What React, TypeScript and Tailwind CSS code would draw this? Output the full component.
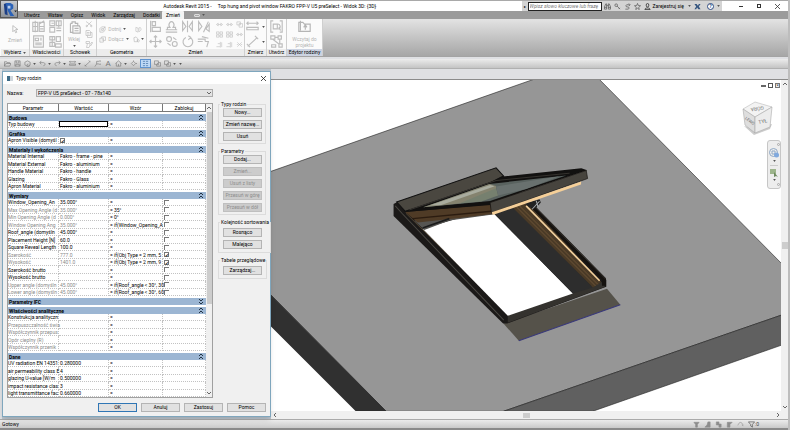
import { useState } from 'react';
import type { ReactNode } from 'react';
import { clsx } from 'clsx';

type Row = {
  name: string;
  value?: string;
  formula?: string;
  lock?: boolean;
  muted?: boolean;
  field?: 'text' | 'check';
};

type Section = { title: string; rows: Row[]; collapsed?: boolean };

const SECTIONS: Section[] = [
  { title: 'Budowa', rows: [{ name: 'Typ budowy', field: 'text' }] },
  { title: 'Grafika', rows: [{ name: 'Apron Visible (domyśl', field: 'check' }] },
  {
    title: 'Materiały i wykończenia',
    rows: [
      { name: 'Material Internal', value: 'Fakro - frame - pine' },
      { name: 'Material External', value: 'Fakro - aluminium' },
      { name: 'Handle Material', value: 'Fakro - handle' },
      { name: 'Glazing', value: 'Fakro - Glass' },
      { name: 'Apron Material', value: 'Fakro - aluminium' },
    ],
  },
  {
    title: 'Wymiary',
    rows: [
      { name: 'Window_Opening_An', value: '35.000°', lock: false },
      { name: 'Max Opening Angle (d', value: '35.000°', formula: '35°', lock: false, muted: true },
      { name: 'Min Opening Angle (d', value: '0.000°', formula: '0°', lock: false, muted: true },
      { name: 'Window Opening Ang', value: '35.000°', formula: 'if(Window_Opening_A', lock: false, muted: true },
      { name: 'Roof_angle (domyśln', value: '45.000°', lock: false },
      { name: 'Placement Height [N]', value: '60.0', lock: false },
      { name: 'Square Reveal Length', value: '100.0', lock: false },
      { name: 'Szerokość', value: '777.0', formula: 'if(Obj Type = 2 mm, 5', lock: true, muted: true },
      { name: 'Wysokość', value: '1401.0', formula: 'if(Obj Type = 2 mm, 9', lock: true, muted: true },
      { name: 'Szerokość brutto', lock: false },
      { name: 'Wysokość brutto', lock: false },
      { name: 'Upper angle (domyśln', value: '45.000°', formula: 'if(Roof_angle < 30°, 30', lock: false, muted: true },
      { name: 'Lower angle (domyśln', value: '45.000°', formula: 'if(Roof_angle < 30°, 60', lock: false, muted: true },
    ],
  },
  { title: 'Parametry IFC', rows: [], collapsed: true },
  {
    title: 'Właściwości analityczne',
    rows: [
      { name: 'Konstrukcja analityczn' },
      { name: 'Przepuszczalność świa', muted: true },
      { name: 'Współczynnik przepus', muted: true },
      { name: 'Opór cieplny (R)', muted: true },
      { name: 'Współczynnik przenik', muted: true },
    ],
  },
  {
    title: 'Dane',
    rows: [
      { name: 'UV radiation EN 14351', value: '0.280000' },
      { name: 'air permeability class E', value: '4' },
      { name: 'glazing U-value [W/m', value: '0.500000' },
      { name: 'impact resistance clas', value: '3' },
      { name: 'light transmittance fac', value: '0.660000' },
    ],
  },
];

const GROUPS = [
  { title: 'Typy rodzin', buttons: ['Nowy...', 'Zmień nazwę...', 'Usuń'], disabled: [] as string[], roomy: false },
  {
    title: 'Parametry',
    buttons: ['Dodaj...', 'Zmień...', 'Usuń z listy', 'Przesuń w górę', 'Przesuń w dół'],
    disabled: ['Zmień...', 'Usuń z listy', 'Przesuń w górę', 'Przesuń w dół'],
    roomy: false,
  },
  { title: 'Kolejność sortowania', buttons: ['Rosnąco', 'Malejąco'], disabled: [] as string[], roomy: true },
  { title: 'Tabele przeglądowe', buttons: ['Zarządzaj...'], disabled: [] as string[], roomy: true },
];

const TABS = ['Utwórz', 'Wstaw', 'Opisz', 'Widok', 'Zarządzaj', 'Dodatki'];

// All glyphs are drawn on a 16 x 16 grid.
const GLYPHS: Record<string, ReactNode> = {
  cursor: <path d="M5 1v11l3-3 2 5 2-1-2-5h4z" />,
  family: <path d="M1 3h6v11H1zM9 3h6v11H9zM1 8h6M9 8h6M4 1v14M9 5l6-4M10 11h4" />,
  typeProps: <path d="M1 1h6v6H1zM9 1h6v6H9zM1 9h6v6H1zM9 10h6M9 13h6M3 4h3M12 1v8" />,
  properties: <path d="M2 1h12v14H2zM4 4h4v3H4zM10 4h2M10 6h2M4 10h8M4 12h8" />,
  typeGrid: <path d="M1 2h6v4H1zM9 2h5v6H9zM1 9h6v5H1zM8 11h7v4H8zM4 2v12" />,
  paste: <path d="M3 3h2V1h4v2h3v3M3 3v11h3M6 6h8l1 2v7H6zM8 9h5M8 12h5" />,
  cut: <path d="M2 3l11 8M13 3L3 13M2 12a1.500 1.500 0 1 0 3 0 1.500 1.500 0 1 0-3 0M11 12a1.500 1.500 0 1 0 3 0 1.500 1.500 0 1 0-3 0" />,
  copy: <path d="M2 1h7l2 2v8H2zM5 11v4h9V5h-3M4 5h5M4 8h5" />,
  brush: <path d="M2 3h7v4H2zM5 7l-2 8h5l2-4M9 10l5-6 1 2-4 6z" />,
  cope: <path d="M2 6l4-4h8v7l-4 5H2zM6 6h4v4H6zM10 6l4-4" />,
  join: <path d="M2 5h8v9H2zM6 5V2h9v8h-5M6 9h4" />,
  split: <path d="M2 3l5 2v9l-5-2zM9 4c5-2 6 3 4 6s-4 3-4 3z" />,
  paint: <path d="M2 4l5-2 3 3v8H3zM12 8a2 3 0 1 0 .1 0" />,
  align: <path d="M2 1v14M4 2h4v5H4zM4 9h10v5H4z" />,
  offset: <path d="M1 12h14M3 12V9h3a3 4 0 1 1 4 0h3v3M1 15h14" />,
  mirror: <path d="M8 1v14M2 2v11l4-5zM14 2v11l-4-5z" />,
  mirrorDraw: <path d="M2 2v11l4-5zM8 15l6-13M15 5v9l-4-3z" />,
  move: <path d="M8 1v14M1 8h14M6 3l2-2 2 2M6 13l2 2 2-2M3 6L1 8l2 2M13 6l2 2-2 2" />,
  copyObj: <path d="M2 5a3 3 0 1 0 6 0 3 3 0 1 0-6 0M9 11a3 3 0 1 0 6 0 3 3 0 1 0-6 0M10 3l4 3M3 10l4 3" />,
  rotate: <path d="M11 3a6 6 0 1 1-5 0M9 1l3 2-3 3" />,
  trim: <path d="M1 5h9v3M1 8h6M10 8h4l-2 7M6 2l8 2" />,
  pin: <path d="M1 8l4-3v6zM15 8l-4-3v6zM5 8h6" />,
  array: <path d="M1 2h6v5H1zM9 2h6v5H9zM1 9h6v5H1zM9 9h6v5H9z" />,
  scale: <path d="M2 2h8v7H2zM7 6h8v8H7z" />,
  extend: <path d="M1 13h8M10 2v13M4 6h5M13 3v11" />,
  remove: <path d="M3 3l10 10M13 3L3 13M2 8h3M11 8h3" />,
  measure: <path d="M1 4h14M1 9h14v3H1zM3 2L1 4l2 2M13 2l2 2-2 2" />,
  dimension: <path d="M2 14L14 3M1 11l4 4M11 1l4 4" />,
  group: <path d="M4 1H1v14h3M12 1h3v14h-3M4 5h5v6H4zM9 5a3 3 0 1 1 1 6M11 9l2 4" />,
  create: <path d="M1 1h5v4H1zM10 1h4v4h-4zM6 3h4M3 5l8 6M12 5v5M2 12h5v3H2zM11 11h4v4h-4z" />,
  load: <path d="M1 3v11h14V5H8L6 3zM9 12V7M7 9l2-3 2 3M3 1v12" />,
  open: <path d="M1 14V4h5l1 2h6v2M1 14l3-6h12l-3 6z" />,
  save: <path d="M2 2h12v12H2zM5 2v5h6V2M4 14v-4h8v4" />,
  sync: <path d="M2 5l6-3 6 3v6l-6 4-6-4zM10 9a3 3 0 1 0 3 3" />,
  undo: <path d="M2 6h8c5 0 5 7 0 7M5 2L2 6l3 4" />,
  redo: <path d="M14 6H6c-5 0-5 7 0 7M11 2l3 4-3 4" />,
  tag: <path d="M2 15l4-6M6 9V3h5a4 4 0 1 1 0 6z" />,
  house: <path d="M1 8l7-6 7 6M3 7v7h10V7M8 14V9" />,
  section: <path d="M3 8l5-5 5 5-5 5zM13 8h3M8 1v2" />,
  thin: <path d="M2 3h5M9 3h5M2 8h5M9 8h5M2 13h5M9 13h5" />,
  windows: <path d="M1 2h9v8H1zM6 10v4h9V6h-5M7 7l3 3" />,
  binoculars: <path d="M1 14V9l3-7h2v12zM15 14V9l-3-7h-2v12zM6 6h4M1 10h5M10 10h5" />,
  key: <path d="M2 5a3 3 0 1 0 6 0 3 3 0 1 0-6 0M7 7l7 7M11 13l2-2" />,
  exchange: <path d="M13 4H6a3 3 0 0 0 0 5h4a3 3 0 0 1 0 5H3M11 1l3 3-3 3" />,
  star: <path d="M8 1l2 5h5l-4 4 1 5-4-3-4 3 1-5-4-4h5z" />,
  user: <path d="M5 5a3 4 0 1 0 6 0 3 4 0 1 0-6 0M2 15c0-5 12-5 12 0z" />,
  filter: <path d="M1 2h14l-5 6v6l-4-3V8z" />,
  selectLink: <path d="M2 3h12l-4 5v6H6V8z" fill="currentColor" />,
  selectUnder: <path d="M9 2h5v12H2l5-5z" fill="currentColor" />,
  selectPin: <path d="M3 2h6v5h5v7H9V9H3z" fill="currentColor" />,
  selectFace: <path d="M3 3h11L9 8v6H3z" fill="currentColor" />,
  drag: <path d="M2 10c3-9 9-9 12 0M11 9l3 2" />,
};

function Glyph({ name, className }: { name: string; className?: string }) {
  return (
    <svg
      viewBox="0 0 16 16"
      fill="none"
      stroke="currentColor"
      strokeWidth="1.4"
      className={clsx('shrink-0', className)}
      aria-hidden="true"
    >
      {GLYPHS[name]}
    </svg>
  );
}

function Caret() {
  return (
    <svg viewBox="0 0 4 3" className="h-[2px] w-[3px] shrink-0" aria-hidden="true">
      <path d="M0 0h4L2 3z" fill="#555" />
    </svg>
  );
}

function Tool({ glyph, label, size = 'lg' }: { glyph: string; label: string; size?: 'sm' | 'md' | 'lg' }) {
  return (
    <button type="button" aria-label={label} className="flex items-center justify-center text-[#bdbdbd]">
      <Glyph
        name={glyph}
        className={size === 'lg' ? 'size-[13px]' : size === 'md' ? 'size-[8px]' : 'size-[7px]'}
      />
    </button>
  );
}

function Panel({ title, className, active, menu, children }: {
  title: string;
  className: string;
  active?: boolean;
  menu?: boolean;
  children: ReactNode;
}) {
  return (
    <section className={clsx('flex shrink-0 flex-col border-r border-[#cfcfcf] bg-[#fbfbfb]', className)}>
      <div className="flex flex-1 items-center justify-center">{children}</div>
      <h2
        className={clsx(
          'flex h-[7px] items-center justify-center gap-[2px] leading-[7px] whitespace-nowrap',
          active ? 'bg-[#ccd3e2]' : 'bg-[#ececec]',
        )}
      >
        {title}
        {menu && <Caret />}
      </h2>
    </section>
  );
}

function TitleBar() {
  return (
    <div className="flex h-[11px] items-stretch border-t border-[#a9a9a9] bg-white">
      <h1 className="flex-1 text-center leading-[10px] whitespace-pre">
        {'Autodesk Revit 2015 -     Top hung and pivot window FAKRO FPP-V U5 preSelect - Widok 3D: {3D}'}
      </h1>
      <div className="flex items-center bg-[#d4d4d4] pr-[2px]">
        <span className="w-[6px] text-center text-[4px]">▸</span>
        <input
          aria-label="Wyszukaj"
          placeholder="Wpisz słowo kluczowe lub frazę"
          className="h-[9px] w-[74px] border border-[#222] bg-white px-px italic placeholder:text-[#777]"
        />
        <div className="flex items-center gap-[3px] pl-[2px] text-[#444]">
          <Glyph name="binoculars" className="size-[7px]" />
          <Glyph name="key" className="size-[7px]" />
          <Glyph name="exchange" className="size-[7px]" />
          <Glyph name="star" className="size-[7px]" />
          <button type="button" className="flex items-center gap-[2px] text-black">
            <Glyph name="user" className="size-[7px]" />
            Zarejestruj się
          </button>
        </div>
        <div className="flex items-center gap-[3px] pl-[4px]">
          <Caret />
          <svg viewBox="0 0 16 16" className="size-[7px]" aria-hidden="true">
            <path d="M1 2h5l3 4 2-4h4l-4 6 4 6h-5L7 10l-2 4H1l4-6z" fill="#35557f" />
          </svg>
          <button
            type="button"
            aria-label="Pomoc"
            className="ml-[3px] flex size-[7px] items-center justify-center rounded-full border border-[#2e4a80] bg-white font-bold text-[#2e4a80]"
          >
            ?
          </button>
          <Caret />
        </div>
      </div>
      <div className="flex w-[66px] items-center justify-end gap-[14px] pr-[8px] pl-[4px]">
        <button type="button" aria-label="Minimalizuj" className="h-px w-[4px] bg-[#333]" />
        <button type="button" aria-label="Przywróć" className="size-[4px] border border-[#333]" />
        <button type="button" aria-label="Zamknij">
          <svg viewBox="0 0 5 5" className="size-[5px]" stroke="#333" strokeWidth="0.8" aria-hidden="true">
            <path d="M0 0l5 5M5 0L0 5" />
          </svg>
        </button>
      </div>
    </div>
  );
}

function Header() {
  return (
    <header className="flex bg-[#9b9b9b]">
      <button
        type="button"
        aria-label="Menu aplikacji"
        className="flex h-[18px] w-[18px] items-center justify-center border border-[#555] bg-linear-to-b from-[#c4c8ce] to-[#8d9299]"
      >
        <svg viewBox="0 0 16 16" className="size-[15px]" aria-hidden="true">
          <path d="M2 2l3-1 1 13-3-1z" fill="#1c3f86" />
          <path d="M4 1h5l3 2v4l-3 2 4 6H9L6 9z" fill="#2a62b8" />
          <path d="M6 4h3v3H6z" fill="#b9cdea" />
          <path d="M13 9h3l-1.500 2z" fill="#222" />
        </svg>
      </button>
      <div className="flex-1">
        <TitleBar />
        <nav className="flex h-[8px] items-center pl-[6px] leading-[8px]">
          <div className="flex gap-[8px]">
            {TABS.map((tab) => (
              <a key={tab} href="#">
                {tab}
              </a>
            ))}
          </div>
          <a href="#" aria-current="page" className="ml-[2px] rounded-t-[1px] bg-[#f4f4f4] px-[4px]">
            Zmień
          </a>
          <button
            type="button"
            aria-label="Minimalizuj wstążkę"
            className="ml-[10px] flex items-center gap-[2px]"
          >
            <span className="h-[3px] w-[6px] rounded-[1px] border border-[#ddd] bg-[#aaa]" />
            <Caret />
          </button>
        </nav>
      </div>
    </header>
  );
}

function Ribbon() {
  return (
    <div className="flex h-[38px] border-b border-[#a3a3a3] bg-linear-to-b from-[#e3e3e3] to-[#a6a6a6]">
      <Panel title="Wybierz" menu className="w-[30px] pl-px">
        <button type="button" className="flex flex-col items-center gap-[3px] text-[#b5b5b5]">
          <Glyph name="cursor" className="size-[9px]" />
          Zmień
        </button>
      </Panel>
      <Panel title="Właściwości" className="w-[34px]">
        <div className="grid grid-cols-2 gap-x-[4px] gap-y-[2px]">
          <Tool glyph="family" label="Kategoria rodziny" />
          <Tool glyph="typeProps" label="Typy rodzin" />
          <Tool glyph="properties" label="Właściwości" />
          <Tool glyph="typeGrid" label="Właściwości typu" />
        </div>
      </Panel>
      <Panel title="Schowek" className="w-[33px]">
        <div className="flex items-center gap-[4px]">
          <button type="button" className="flex flex-col items-center gap-[2px] text-[#b5b5b5]">
            <Glyph name="paste" className="size-[13px]" />
            Wklej
            <Caret />
          </button>
          <div className="flex flex-col gap-[2px]">
            <Tool glyph="cut" label="Wytnij" size="md" />
            <Tool glyph="copy" label="Kopiuj" size="md" />
            <Tool glyph="brush" label="Uzgodnij właściwości" size="md" />
          </div>
        </div>
      </Panel>
      <Panel title="Geometria" className="w-[50px]">
        <div className="grid grid-cols-[auto_auto] items-center gap-x-[4px] gap-y-[3px] text-[#b5b5b5]">
          <button type="button" className="flex items-center gap-[2px]">
            <Glyph name="cope" className="size-[7px]" />
            Dotnij
            <Caret />
          </button>
          <Tool glyph="split" label="Podziel" size="sm" />
          <button type="button" className="flex items-center gap-[2px]">
            <Glyph name="join" className="size-[7px]" />
            Dołącz
            <Caret />
          </button>
          <button type="button" aria-label="Maluj" className="flex items-center gap-px">
            <Glyph name="paint" className="size-[7px]" />
            <Caret />
          </button>
        </div>
      </Panel>
      <Panel title="Zmień" className="w-[98px]">
        <div className="flex items-center gap-[6px]">
          <div className="grid grid-cols-4 gap-x-[3px] gap-y-[2px]">
            <Tool glyph="align" label="Wyrównaj" />
            <Tool glyph="offset" label="Odsuń" />
            <Tool glyph="mirror" label="Lustro - wybierz oś" />
            <Tool glyph="mirrorDraw" label="Lustro - narysuj oś" />
            <Tool glyph="move" label="Przesuń" />
            <Tool glyph="copyObj" label="Kopiuj element" />
            <Tool glyph="rotate" label="Obróć" />
            <Tool glyph="trim" label="Przytnij" />
          </div>
          <div className="grid grid-cols-3 gap-[3px]">
            <Tool glyph="pin" label="Podziel element" size="sm" />
            <Tool glyph="pin" label="Podziel z odstępem" size="sm" />
            <Tool glyph="scale" label="Odepnij" size="sm" />
            <Tool glyph="array" label="Szyk" size="sm" />
            <Tool glyph="array" label="Skala" size="sm" />
            <Tool glyph="pin" label="Przypnij" size="sm" />
            <Tool glyph="extend" label="Wydłuż pojedynczy" size="sm" />
            <Tool glyph="extend" label="Wydłuż wiele" size="sm" />
            <Tool glyph="remove" label="Usuń element" size="sm" />
          </div>
        </div>
      </Panel>
      <Panel title="Zmierz" className="w-[22px]">
        <div className="grid grid-cols-[auto_auto] items-center gap-x-[3px] gap-y-[2px]">
          <Tool glyph="measure" label="Zmierz odległość" />
          <Caret />
          <Tool glyph="dimension" label="Wymiar" />
          <Caret />
        </div>
      </Panel>
      <Panel title="Utwórz" className="w-[20px]">
        <div className="flex flex-col gap-[2px]">
          <Tool glyph="group" label="Utwórz grupę" />
          <Tool glyph="create" label="Utwórz podobny" />
        </div>
      </Panel>
      <Panel title="Edytor rodziny" active className="w-[36px]">
        <button type="button" className="flex flex-col items-center leading-[6px] text-[#b5b5b5]">
          <Glyph name="load" className="mb-[3px] size-[13px]" />
          <span>Wczytaj do</span>
          <span>projektu</span>
        </button>
      </Panel>
    </div>
  );
}

function QuickAccess() {
  const tools: { glyph: string; label: string; menu?: boolean; on?: boolean }[] = [
    { glyph: 'open', label: 'Otwórz' },
    { glyph: 'save', label: 'Zapisz' },
    { glyph: 'sync', label: 'Synchronizuj', menu: true },
    { glyph: 'undo', label: 'Cofnij', menu: true },
    { glyph: 'redo', label: 'Ponów', menu: true },
    { glyph: 'measure', label: 'Zmierz', menu: true },
    { glyph: 'dimension', label: 'Wymiar wyrównany' },
    { glyph: 'tag', label: 'Oznacz' },
    { glyph: 'text', label: 'Tekst' },
    { glyph: 'house', label: 'Widok 3D', menu: true },
    { glyph: 'section', label: 'Przekrój' },
    { glyph: 'thin', label: 'Cienkie linie', on: true },
    { glyph: 'windows', label: 'Zamknij ukryte' },
    { glyph: 'windows', label: 'Przełącz okna', menu: true },
  ];
  return (
    <div className="mt-[2px] flex h-[10px] items-center gap-[3px] border-b border-[#b0b0b0] bg-linear-to-b from-[#ececec] to-[#c4c4c4] pl-[4px] text-[#777]">
      {tools.map(({ glyph, label, menu, on }) => (
        <button
          key={label}
          type="button"
          aria-label={label}
          className={clsx(
            'flex h-[9px] items-center gap-[2px]',
            on && 'border border-[#5f93cf] bg-[#bfd9f6] px-px text-[#2d5d98]',
          )}
        >
          {glyph === 'text' ? (
            <span className="w-[8px] text-center text-[8px]">A</span>
          ) : (
            <Glyph name={glyph} className="size-[7px]" />
          )}
          {menu && <Caret />}
        </button>
      ))}
      <Caret />
    </div>
  );
}

function DialogButton({ label, disabled, primary }: { label: string; disabled?: boolean; primary?: boolean }) {
  return (
    <button
      type="button"
      disabled={disabled}
      className={clsx(
        'h-[9px] w-[39px] border text-center leading-[7px]',
        disabled && 'border-[#bfbfbf] bg-[#cccccc] text-[#8c8c8c]',
        !disabled && primary && 'border-[#2f76b5] bg-[#e1e1e1]',
        !disabled && !primary && 'border-[#b4b4b4] bg-[#e1e1e1]',
      )}
    >
      {label}
    </button>
  );
}

const CHECKBOX =
  'block size-[5px] appearance-none border-t border-l border-[#777] bg-white text-[5px] leading-[4px] font-bold checked:border checked:after:block checked:after:content-["✓"]';

function ParameterTable() {
  const [locks, setLocks] = useState<Record<string, boolean>>({});
  const cell = 'border-r border-b border-dotted border-[#c2c2c2] p-0 whitespace-nowrap';
  const head = 'border-r border-b border-[#777] p-0 font-normal';

  return (
    <div className="flex border border-[#a0a0a0] bg-white">
      <div className="min-w-0 flex-1">
        <table className="w-full table-fixed border-separate border-spacing-0 leading-[6px]">
          <colgroup>
            <col className="w-[51px]" />
            <col className="w-[50px]" />
            <col className="w-[54px]" />
            <col />
          </colgroup>
          <thead>
            <tr className="h-[8px]">
              <th className={head}>Parametr</th>
              <th className={head}>Wartość</th>
              <th className={head}>Wzór</th>
              <th className={head}>Zablokuj</th>
            </tr>
          </thead>
          {SECTIONS.map((section) => (
            <tbody key={section.title}>
              <tr className="h-[2px]">
                <td colSpan={4} className="p-0" />
              </tr>
              <tr className="h-[7px] bg-[#9cb6d3]">
                <th colSpan={4} className="p-0 px-px text-left font-bold">
                  <div className="flex items-center justify-between pr-[2px]">
                    {section.title}
                    <svg viewBox="0 0 4 5" className="h-[5px] w-[4px]" fill="none" stroke="#234" aria-hidden="true">
                      <path d={section.collapsed ? 'M0 0l2 2 2-2M0 3l2 2 2-2' : 'M0 2l2-2 2 2M0 5l2-2 2 2'} />
                    </svg>
                  </div>
                </th>
              </tr>
              {section.rows.map((row, i) => (
                <tr
                  key={row.name}
                  className={clsx(i % 2 ? 'h-[8px]' : 'h-[7px]', row.muted && 'text-[#8a8a8a]')}
                >
                  <td className={cell}>{row.name}</td>
                  <td className={clsx(cell, row.field !== 'text' && 'pl-px')}>
                    {row.field === 'text' && (
                      <input aria-label={row.name} className="block h-[6px] w-full border border-black" />
                    )}
                    {row.field === 'check' && (
                      <input type="checkbox" aria-label={row.name} defaultChecked className={CHECKBOX} />
                    )}
                    {row.value}
                  </td>
                  <td className={clsx(cell, 'pl-px text-black')}>= {row.formula}</td>
                  <td className={clsx(cell, 'pl-px')}>
                    {row.lock !== undefined && (
                      <input
                        type="checkbox"
                        aria-label={`Zablokuj ${row.name}`}
                        checked={locks[row.name] ?? row.lock}
                        onChange={(e) => setLocks({ ...locks, [row.name]: e.target.checked })}
                        className={clsx(CHECKBOX, 'text-black')}
                      />
                    )}
                  </td>
                </tr>
              ))}
            </tbody>
          ))}
        </table>
      </div>
      <div className="flex w-[6px] shrink-0 flex-col items-center bg-[#f0f0f0]">
        <Chevron d="M0 3l2-2 2 2" />
        <div className="h-[192px] w-[5px] bg-[#cdcdcd]" />
        <div className="mt-auto">
          <Chevron d="M0 1l2 2 2-2" />
        </div>
      </div>
    </div>
  );
}

function Chevron({ d }: { d: string }) {
  return (
    <svg viewBox="0 0 4 4" className="my-[2px] size-[4px] shrink-0" fill="none" stroke="#666" aria-hidden="true">
      <path d={d} />
    </svg>
  );
}

function FamilyTypesDialog() {
  return (
    <div
      role="dialog"
      aria-label="Typy rodzin"
      className="z-10 flex w-[269px] shrink-0 flex-col border border-[#7fa6bd] bg-[#f0f0f0] shadow-md"
    >
      <div className="flex h-[12px] items-center gap-[3px] bg-white px-[4px]">
        <svg viewBox="0 0 6 5" className="h-[5px] w-[6px]" aria-hidden="true">
          <path d="M0 0h6v5H0z" fill="#cfd6dc" />
          <path d="M0 0h3v5H0z" fill="#3d6a86" />
        </svg>
        <h2>Typy rodzin</h2>
        <button type="button" aria-label="Zamknij okno" className="ml-auto">
          <svg viewBox="0 0 5 5" className="size-[5px]" stroke="#222" strokeWidth="0.8" aria-hidden="true">
            <path d="M0 0l5 5M5 0L0 5" />
          </svg>
        </button>
      </div>
      <div className="flex gap-[5px] px-[4px] pt-[5px]">
        <div className="flex min-w-0 flex-1 flex-col">
          <div className="flex h-[8px] items-center">
            <label htmlFor="family-type" className="w-[29px]">
              Nazwa:
            </label>
            <div className="grid flex-1 items-center">
              <select
                id="family-type"
                className="col-start-1 row-start-1 h-[8px] appearance-none border border-[#adadad] bg-[#e3e3e3] px-px leading-[6px]"
              >
                <option>FPP-V U5 preSelect - 07 - 78x140</option>
              </select>
              <div className="pointer-events-none col-start-1 row-start-1 justify-self-end pr-[2px]">
                <Chevron d="M0 1l2 2 2-2" />
              </div>
            </div>
          </div>
          <div className="mt-[6px]">
            <ParameterTable />
          </div>
        </div>
        <div className="flex w-[48px] flex-col gap-[4px] pt-[12px]">
          {GROUPS.map((group) => (
            <fieldset
              key={group.title}
              className={clsx('border border-[#dcdcdc] pl-[4px]', group.roomy ? 'pt-[3px] pb-[3px]' : 'pt-px pb-[2px]')}
            >
              <legend className="-ml-[3px] px-px leading-[6px] whitespace-nowrap">{group.title}</legend>
              <div className="flex flex-col gap-[3px]">
                {group.buttons.map((label) => (
                  <DialogButton key={label} label={label} disabled={group.disabled.includes(label)} />
                ))}
              </div>
            </fieldset>
          ))}
        </div>
      </div>
      <div className="flex justify-end gap-[4px] px-[4px] pt-[5px] pb-[4px]">
        <DialogButton label="OK" primary />
        <DialogButton label="Anuluj" />
        <DialogButton label="Zastosuj" />
        <DialogButton label="Pomoc" />
      </div>
    </div>
  );
}

function Model() {
  return (
    <svg
      viewBox="272 80 509 331"
      preserveAspectRatio="xMidYMid slice"
      className="absolute inset-0 size-full"
      role="img"
      aria-label="Widok 3D okna dachowego"
    >
      <g stroke="#222" strokeWidth="0.6">
        <path d="M262 175L536 79h63l191 193v40L504 411H387L262 285z" fill="#969696" />
        <path d="M262 285l125 126h-30L262 316z" fill="#303030" />
        <path d="M790 312L504 411h89l197-69z" fill="#606060" />
      </g>
      {/* the window itself, drawn at three times its size */}
      <g transform="translate(380 150) scale(0.3333)">
        <path d="M372 520l46 52 304-108-40-48z" fill="#55524a" />
        <path d="M418 572l304-108" stroke="#39397c" strokeWidth="3" />
        <path d="M43 162L60 153 372 78l308 312v20L383 520h-12L43 198z" fill="#1b1918" />
        <path d="M385 518v-22l290-103v18z" fill="#34322e" />
        <path d="M48 168l20 22 305 320" stroke="#4a4843" strokeWidth="3" fill="none" />
        <path d="M80 190l310 305" stroke="#6d5a40" strokeWidth="2" fill="none" />
        <path d="M52 156L350 54l22 24-38 20L78 184z" fill="#4a4740" stroke="#111" strokeWidth="3" />
        <path d="M130 236l110-32 105-12 235 238-195 67z" fill="#fff" />
        <path d="M345 192l55-24 240 244-60 18z" fill="#2d2d2d" />
        <path d="M395 168l50-10 220 238-25 16z" fill="#4a3a26" />
        <path d="M408 168l240 240M420 168l235 235" stroke="#7d6140" strokeWidth="2" />
        <path d="M440 168l220 224" stroke="#f1cf9c" strokeWidth="5" />
        <path d="M455 165l218 222v20" stroke="#15120f" strokeWidth="12" fill="none" />
        <path d="M470 175l208 212" stroke="#45423c" strokeWidth="2" />
        <path d="M435 160l45-12 4 10-16 18-18-4z" fill="#222" />
        <path d="M458 178l22-24M470 152l6 20" stroke="#a9adb0" strokeWidth="3" />
        <path d="M105 212l30 28 75-28 130-18v-20z" fill="#565552" />
        <path d="M78 186l254-22 6 28-98 12-125 14z" fill="#4f3b26" />
        <path d="M100 206l236-22" stroke="#2b1c10" strokeWidth="4" />
        <path d="M130 234l80-28" stroke="#1b1b1b" strokeWidth="5" />
        <path d="M75 186l270-94 25-12 235-25 18 6-290 96v8z" fill="#121110" />
        <path d="M132 172L330 102l230-25-228 76z" fill="#59625f" />
        <path d="M132 172L330 102l20 6v26l-110 27z" fill="#85836f" />
        <path d="M150 167l182-62 14 4-160 56z" fill="#a9ac9f" />
        <path d="M240 161l110-46 6 22-50 18z" fill="#76806f" />
        <path d="M350 110l190-31-100 38-84 20z" fill="#69716f" />
        <path d="M90 180l260-88 220-22" stroke="#47443e" strokeWidth="2" fill="none" />
        <path d="M332 158L620 62l4 24-288 103z" fill="#47443e" stroke="#15120f" strokeWidth="2" />
        <path d="M337 187l268-92-1 9-264 91z" fill="#f5cf98" />
      </g>
    </svg>
  );
}

function ViewCube() {
  return (
    <svg viewBox="0 0 34 36" className="h-[36px] w-[34px]" aria-label="ViewCube" role="img">
      <path d="M4 25l10 9 16-6 2-5-18 4z" fill="#ccc" />
      <path d="M3 8l12-7 17 5-17 10z" fill="#f3f3f3" stroke="#bbb" strokeWidth="0.6" />
      <path d="M3 8l12 8v16L5 24z" fill="#dedede" stroke="#aaa" strokeWidth="0.6" />
      <path d="M15 16l17-10-2 20-15 6z" fill="#ececec" stroke="#aaa" strokeWidth="0.6" />
      <text x="17" y="6" transform="rotate(172 17 6)" fontSize="5" fill="#777" textAnchor="middle">
        GÓRA
      </text>
      <text x="23" y="22" transform="rotate(-12 23 22)" fontSize="5" fill="#666" textAnchor="middle">
        TYŁ
      </text>
      <text x="9" y="21" transform="rotate(38 9 21)" fontSize="4" fill="#666" textAnchor="middle">
        LEWO
      </text>
    </svg>
  );
}

function NavigationBar() {
  return (
    <div className="flex h-[49px] w-[14px] flex-col items-center justify-between rounded-[3px] border border-[#c6c6c6] bg-[#ededed] py-[2px]">
      <span className="size-[3px] self-end rounded-full border border-[#aaa]" />
      <button type="button" aria-label="Koło nawigacji">
        <svg viewBox="0 0 10 10" className="size-[10px]" fill="none" aria-hidden="true">
          <circle cx="4.500" cy="4.500" r="4" stroke="#8ea7c4" />
          <path d="M3 3h3v3H3z" stroke="#8ea7c4" />
          <circle cx="7.500" cy="7" r="2.500" fill="#7fa8dd" />
        </svg>
      </button>
      <Caret />
      <button type="button" aria-label="Powiększ" className="border-t border-[#ccc] pt-[3px]">
        <svg viewBox="0 0 8 8" className="size-[8px]" aria-hidden="true">
          <path d="M0 0h6v5H0z" fill="#9db58c" />
          <path d="M4 3l4 5-2-1-2 1z" fill="#6f8a60" />
        </svg>
      </button>
      <Caret />
      <span className="size-[3px] self-end rounded-full border border-[#aaa]" />
    </div>
  );
}

function Viewport() {
  return (
    <main className="flex min-w-0 flex-1 flex-col pt-[10px]">
      <div className="flex flex-1 border-t border-[#8b8b8b]">
        <div className="relative flex-1 overflow-hidden bg-white">
          <Model />
          <div className="absolute top-[3px] right-px flex items-center gap-[2px] text-[#444]">
            <span className="h-[2px] w-[5px] border border-[#666]" />
            <span className="size-[5px] border border-[#555]" />
            <span className="flex size-[5px] items-center justify-center border border-[#777] leading-none">×</span>
          </div>
          <div className="absolute top-[21px] right-[7px]">
            <ViewCube />
          </div>
          <div className="absolute top-[60px] right-0">
            <NavigationBar />
          </div>
        </div>
        <div className="flex w-[7px] flex-col items-center justify-between bg-[#f0f0f0]">
          <Chevron d="M0 3l2-2 2 2" />
          <div className="h-[7px] w-[6px] bg-[#cdcdcd]" />
          <Chevron d="M0 1l2 2 2-2" />
        </div>
      </div>
      <div className="flex h-[8px] items-center justify-between bg-[#f0f0f0] pr-[8px] pl-[2px]">
        <Chevron d="M3 0L1 2l2 2" />
        <div className="h-[5px] w-[7px] bg-[#cdcdcd]" />
        <Chevron d="M1 0l2 2-2 2" />
      </div>
    </main>
  );
}

export default function App() {
  return (
    <div className="flex min-h-screen flex-col border-r-2 border-[#bdbdbd] bg-[#dfe0e3] font-[Roboto,'Liberation_Sans',sans-serif] text-[5px] leading-[7px] text-black">
      <Header />
      <Ribbon />
      <QuickAccess />
      <div className="flex flex-1 items-stretch pl-[2px]">
        <div className="flex items-start bg-[#b9c3cc] pt-[2px]">
          <FamilyTypesDialog />
        </div>
        <Viewport />
      </div>
      <footer className="flex h-[11px] items-center justify-between border-t border-b-2 border-t-[#aaa] border-b-[#8a8a8a] bg-linear-to-b from-[#ececec] to-[#c9c9c9] pr-[29px] pl-[2px]">
        <span>Gotowy</span>
        <div className="flex items-center gap-[4px] text-[#8d8d8d]">
          <Glyph name="selectLink" className="size-[7px]" />
          <Glyph name="selectUnder" className="size-[7px]" />
          <Glyph name="selectPin" className="size-[7px]" />
          <Glyph name="selectFace" className="size-[7px]" />
          <Glyph name="drag" className="size-[7px]" />
          <span className="flex items-center text-[#444]">
            <Glyph name="filter" className="size-[7px]" />
            :0
          </span>
        </div>
      </footer>
    </div>
  );
}
